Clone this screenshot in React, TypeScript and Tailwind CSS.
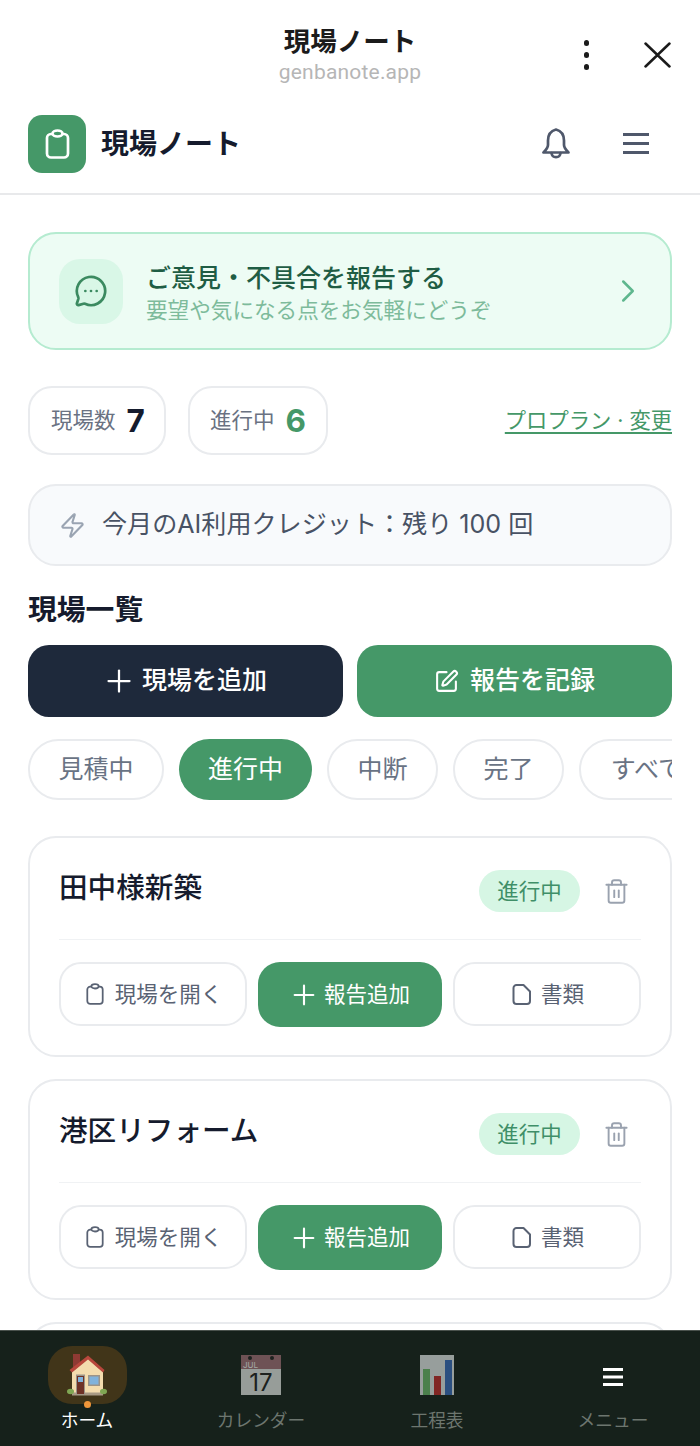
import React from "react";
import { ChevronRight, MessageCircleMore, Plus, SquarePen, Trash2, Zap } from "lucide-react";

const FONT = { fontFamily: '"Inter", "Noto Sans CJK JP", sans-serif' };

const TABS = [
  { label: "見積中", w: "w-[136px]" },
  { label: "進行中", w: "w-[133px]", active: true },
  { label: "中断", w: "w-[111px]" },
  { label: "完了", w: "w-[111px]" },
  { label: "すべて", w: "w-[136px]" },
];

// --- Icons drawn to match the reference ---

const ClipIcon = ({ w, h, sw, fill }: { w: number; h: number; sw: number; fill: string }) => (
  <svg width={w} height={h} viewBox="0 0 24 30" fill="none" stroke="currentColor" strokeWidth={sw}>
    <rect x="1.5" y="5" width="21" height="23.5" rx="4" />
    <ellipse cx="12" cy="4.5" rx="5" ry="3" fill={fill} />
  </svg>
);

const FileIcon = () => (
  <svg width="19" height="21" viewBox="0 0 19 21" fill="none" stroke="currentColor" strokeWidth="2" strokeLinejoin="round">
    <path d="M4.5 1 H11.5 L18 7.5 V17 a3 3 0 0 1 -3 3 H4.5 a3 3 0 0 1 -3 -3 V4 a3 3 0 0 1 3 -3 z" />
  </svg>
);

const BellIcon = () => (
  <svg width="28" height="31" viewBox="0 0 28 31" fill="none" stroke="#4f586b" strokeWidth="2.7" strokeLinecap="round" strokeLinejoin="round">
    <path d="M14 1.5 C8.5 3 6 7.5 6 12.5 V17 C6 20 4 22 1.5 24.5 H26.5 C24 22 22 20 22 17 V12.5 C22 7.5 19.5 3 14 1.5 Z" />
    <path d="M9.5 25 C10 30.5 18 30.5 18.5 25" />
  </svg>
);

const LinesIcon = ({ w, gap, sw, color }: { w: number; gap: number; sw: number; color: string }) => (
  <svg width={w} height={gap * 2 + sw} stroke={color} strokeWidth={sw}>
    <line x1="0" x2={w} y1={sw / 2} y2={sw / 2} />
    <line x1="0" x2={w} y1={gap + sw / 2} y2={gap + sw / 2} />
    <line x1="0" x2={w} y1={gap * 2 + sw / 2} y2={gap * 2 + sw / 2} />
  </svg>
);

const HouseIcon = () => (
  <svg width="40" height="42" viewBox="0 0 40 42">
    <rect x="6" y="0" width="7" height="13" fill="#8f3a33" />
    <path d="M5 18 L21 4 L36 18 V41 H5 Z" fill="#f3dcae" />
    <path d="M21 1.5 L37.5 16 L36 18.5 L21 5.5 L5 18.5 L2.5 16 Z" fill="#b8473c" />
    <rect x="5" y="38.5" width="31" height="3" fill="#a89a85" />
    <rect x="9" y="20.5" width="9" height="20" fill="#9c9488" />
    <rect x="10" y="22" width="7" height="18" fill="#6e3226" />
    <rect x="11" y="23" width="5" height="5" fill="#7fb2dc" />
    <rect x="21" y="21" width="12" height="11" fill="#9c9488" />
    <rect x="22.5" y="22.5" width="9" height="8" fill="#7fb2dc" />
    <ellipse cx="3.5" cy="37.5" rx="3.5" ry="2.8" fill="#7fa653" />
    <ellipse cx="36.5" cy="37.5" rx="3.5" ry="2.8" fill="#7fa653" />
  </svg>
);

const CalendarIcon = () => (
  <svg width="40" height="40" viewBox="0 0 40 40" className="opacity-60">
    <rect width="40" height="14" fill="#a9747c" />
    <rect y="14" width="40" height="26" fill="#eef0ee" />
    <circle cx="9" cy="3" r="2" fill="#222" />
    <circle cx="31" cy="3" r="2" fill="#222" />
    <text x="2" y="13" fontSize="8" fill="#fff" fontFamily="Inter, sans-serif">JUL</text>
    <text x="20" y="36" textAnchor="middle" fontSize="24" fill="#222" fontFamily="Inter, sans-serif">17</text>
  </svg>
);

const ChartIcon = () => (
  <svg width="34" height="40" viewBox="0 0 34 40" className="opacity-60">
    <rect width="34" height="40" fill="#eef2f2" />
    <rect x="3" y="14" width="7" height="26" fill="#6fc06d" />
    <rect x="14" y="21" width="7" height="19" fill="#c92a2a" />
    <rect x="25" y="5" width="7" height="35" fill="#3a6fc4" />
  </svg>
);

// --- Sub-components ---

const SiteCard = ({ name }: { name: string }) => (
  <div className="bg-white border-2 border-[#e9ebee] rounded-[28px] px-[29px] pt-[26px] pb-[28px] shrink-0">
    <div className="flex justify-between items-start h-[76px] border-b border-[#f0f2f4]">
      <h3 className="text-[28.6px] leading-[50px] font-medium text-[#151b2d] -mt-[1px]">{name}</h3>
      <div className="flex items-center gap-[23px] pr-[11px] pt-[6px]">
        <span className="h-[42px] w-[101px] flex items-center justify-center rounded-full bg-[#d6f6e4] text-[#3f8f68] text-[21.5px]">進行中</span>
        <Trash2 size={27} strokeWidth={1.7} className="text-[#9aa2af]" />
      </div>
    </div>
    <div className="grid grid-cols-[188px_184px_188px] gap-[11px] mt-[22px]">
      <button className="h-[64px] pl-[2px] border-2 border-[#e9ebee] rounded-[22px] flex items-center justify-center gap-[11px] text-[21.5px] text-[#596273]">
        <ClipIcon w={18} h={22} sw={2.4} fill="#ffffff" />現場を開く
      </button>
      <button className="h-[65px] pr-[2px] bg-[#459868] rounded-[22px] flex items-center justify-center gap-[4px] text-[21.5px] text-white">
        <Plus size={32} strokeWidth={1.6} />報告追加
      </button>
      <button className="h-[64px] pl-[2px] border-2 border-[#e9ebee] rounded-[22px] flex items-center justify-center gap-[10px] text-[21.5px] text-[#596273]">
        <FileIcon />書類
      </button>
    </div>
  </div>
);

const NavItem = ({ icon, label, active }: { icon: React.ReactNode; label: string; active?: boolean }) => (
  <div className="flex flex-col items-center">
    <div className={`relative w-[79px] h-[58px] rounded-[24px] flex items-center justify-center ${active ? "bg-[#413519]" : ""}`}>
      {icon}
      {active && <span className="absolute -bottom-[4px] left-[36px] w-[7px] h-[7px] rounded-full bg-[#f0963a]" />}
    </div>
    <span className={`text-[17.7px] leading-[24px] mt-[5px] ${active ? "text-white" : "text-[#6d766f]"}`}>{label}</span>
  </div>
);

export default function App() {
  return (
    <div style={FONT} className="w-[700px] h-[1446px] bg-white flex flex-col overflow-hidden">
      {/* BROWSER BAR */}
      <div className="relative h-[100px] shrink-0 flex flex-col items-center pt-[23px]">
        <div className="text-[26.5px] leading-[36px] font-bold text-[#1b1b1b]">現場ノート</div>
        <div style={{ fontFamily: "Roboto, sans-serif" }} className="text-[21px] leading-[26px] text-[#b6b6b6] tracking-[0.2px]">genbanote.app</div>
        <div className="absolute right-[29px] top-[40px] flex items-center gap-[55px]">
          <div className="flex flex-col gap-[6.5px]">
            <span className="w-[5.5px] h-[5.5px] rounded-full bg-[#1b1b1b]" />
            <span className="w-[5.5px] h-[5.5px] rounded-full bg-[#1b1b1b]" />
            <span className="w-[5.5px] h-[5.5px] rounded-full bg-[#1b1b1b]" />
          </div>
          <svg width="27" height="26" viewBox="0 0 27 26" stroke="#1b1b1b" strokeWidth="2.5" strokeLinecap="round">
            <path d="M1.5 1.5 L25.5 24.5 M25.5 1.5 L1.5 24.5" />
          </svg>
        </div>
      </div>

      {/* APP HEADER */}
      <div className="h-[95px] shrink-0 border-b-2 border-[#e8e9eb] flex items-center justify-between pl-[28px] pr-[51px] pb-[6px]">
        <div className="flex items-center gap-[15px]">
          <div className="w-[58px] h-[58px] rounded-[14px] bg-[#459868] flex items-center justify-center text-white">
            <ClipIcon w={25} h={30} sw={2.7} fill="#459868" />
          </div>
          <span className="text-[28px] font-bold text-[#151b2d]">現場ノート</span>
        </div>
        <div className="flex items-center gap-[53px]">
          <BellIcon />
          <LinesIcon w={26} gap={9} sw={3} color="#4f586b" />
        </div>
      </div>

      <main className="flex-1 min-h-0 overflow-hidden px-[28px] pt-[37px] flex flex-col">
        {/* FEEDBACK BANNER */}
        <div className="h-[118px] shrink-0 rounded-[28px] border-2 border-[#b5ebd0] bg-[#edfcf4] flex items-center pl-[29px] pr-[23px]">
          <div className="w-[64px] h-[65px] rounded-[21px] bg-[#d9f7e7] flex items-center justify-center">
            <MessageCircleMore size={34} strokeWidth={1.9} className="text-[#3b8a60]" />
          </div>
          <div className="ml-[23px] flex-1 mt-[4px]">
            <div className="text-[25px] leading-[33px] font-medium text-[#1f5d44]">ご意見・不具合を報告する</div>
            <div className="text-[21.6px] leading-[30px] text-[#7dbb9b]">要望や気になる点をお気軽にどうぞ</div>
          </div>
          <ChevronRight size={38} strokeWidth={1.6} className="text-[#5fb78e]" />
        </div>

        {/* STATS */}
        <div className="flex items-center mt-[36px] shrink-0">
          <div className="h-[69px] w-[138px] pl-[2px] rounded-[24px] border-2 border-[#e9ebee] flex items-center justify-center gap-[11px]">
            <span className="text-[21.5px] text-[#6a7282]">現場数</span>
            <span className="text-[31.5px] font-bold text-[#151b2d]">7</span>
          </div>
          <div className="h-[69px] w-[140px] ml-[22px] rounded-[24px] border-2 border-[#e9ebee] flex items-center justify-center gap-[11px]">
            <span className="text-[21.5px] text-[#6a7282]">進行中</span>
            <span className="text-[31.5px] font-bold text-[#459868]">6</span>
          </div>
          <a className="ml-auto text-[21.3px] text-[#459868] underline underline-offset-[4px]">プロプラン · 変更</a>
        </div>

        {/* CREDITS */}
        <div className="h-[82px] mt-[29px] shrink-0 rounded-[28px] border-2 border-[#e9ebee] bg-[#f8fafc] flex items-center pl-[29px] gap-[16px]">
          <Zap size={27} strokeWidth={1.9} className="text-[#9aa4b2]" />
          <span className="text-[25.1px] text-[#485264]">今月のAI利用クレジット：残り 100 回</span>
        </div>

        <h2 className="text-[28.8px] leading-[40px] font-bold text-[#151b2d] mt-[24px] shrink-0">現場一覧</h2>

        {/* ACTIONS */}
        <div className="grid grid-cols-2 gap-[14px] mt-[15px] shrink-0">
          <button className="h-[72px] pr-[3px] rounded-[21px] bg-[#1e293b] text-white text-[25px] font-medium flex items-center justify-center gap-[5px]">
            <Plus size={36} strokeWidth={1.5} />現場を追加
          </button>
          <button className="h-[72px] rounded-[21px] bg-[#459868] text-white text-[25px] font-medium flex items-center justify-center gap-[11px]">
            <SquarePen size={25} strokeWidth={2} />報告を記録
          </button>
        </div>

        {/* FILTER TABS */}
        <div className="flex gap-[15px] mt-[22px] overflow-hidden shrink-0 items-center">
          {TABS.map((t) => (
            <div
              key={t.label}
              className={`${t.w} h-[61px] shrink-0 rounded-full flex items-center justify-center text-[25px] ${t.active ? "bg-[#459868] text-white" : "border-2 border-[#e9ebee] text-[#697384]"}`}
            >
              {t.label}
            </div>
          ))}
        </div>

        {/* SITE LIST */}
        <div className="flex flex-col gap-[22px] mt-[36px]">
          <SiteCard name="田中様新築" />
          <SiteCard name="港区リフォーム" />
          <SiteCard name="" />
        </div>
      </main>

      {/* BOTTOM NAV */}
      <nav className="h-[116px] shrink-0 bg-[#16211b] border-t border-[#4a524d] grid grid-cols-[174px_174px_178px_174px] pt-[15px]">
        <NavItem active icon={<HouseIcon />} label="ホーム" />
        <NavItem icon={<CalendarIcon />} label="カレンダー" />
        <NavItem icon={<ChartIcon />} label="工程表" />
        <NavItem icon={<div className="mt-[4px] flex"><LinesIcon w={20} gap={7.5} sw={3} color="#ffffff" /></div>} label="メニュー" />
      </nav>
    </div>
  );
}
